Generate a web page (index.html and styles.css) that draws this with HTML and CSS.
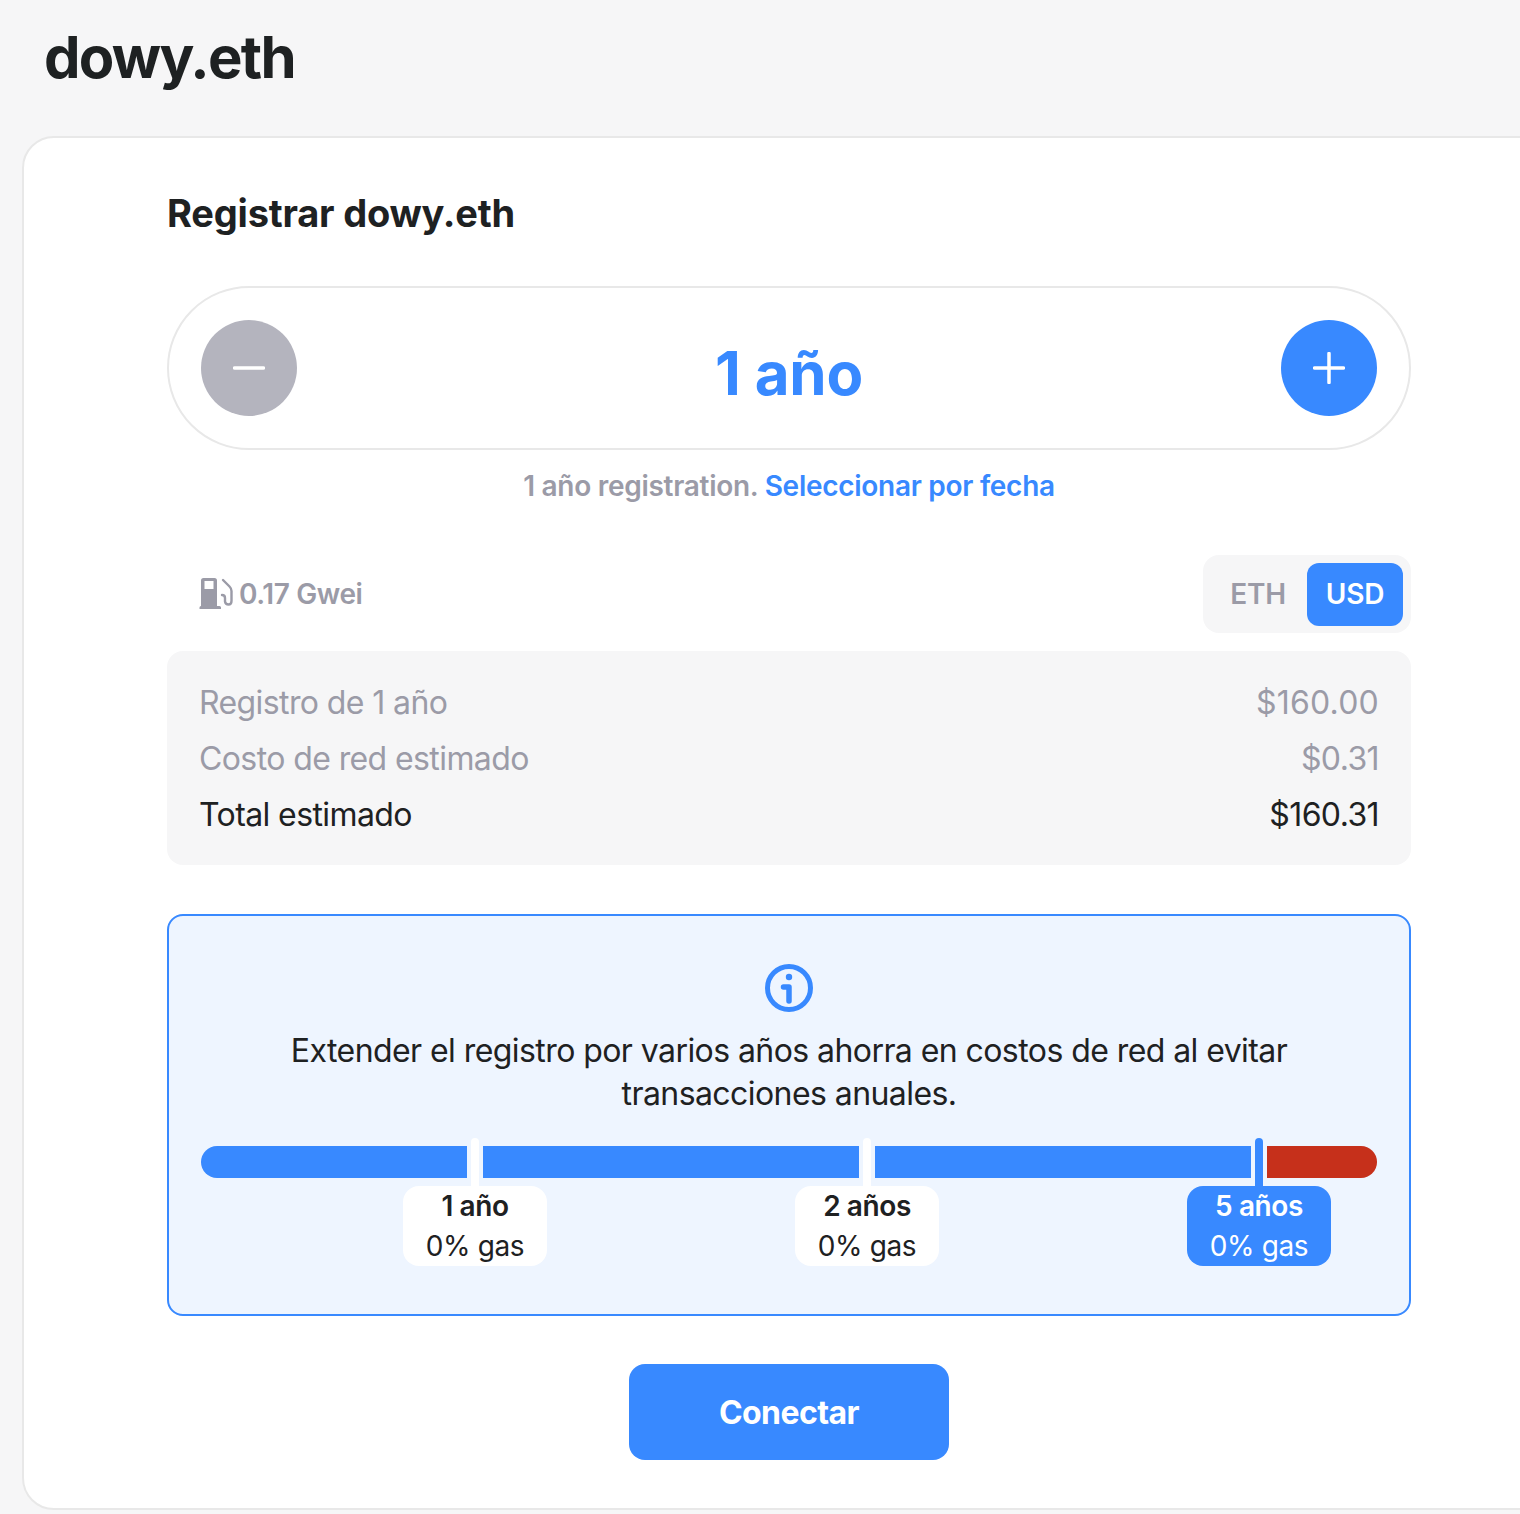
FILE: index.html
```html
<!DOCTYPE html>
<html lang="es">
<head>
<meta charset="utf-8">
<title>dowy.eth</title>
<link rel="stylesheet" href="styles.css">
</head>
<body>
<main class="page">
  <h1 class="title">dowy.eth</h1>
  <section class="card">
    <h2 class="heading">Registrar dowy.eth</h2>
    <div class="stepper">
      <button class="round round-off" aria-label="menos"><svg width="32" height="32" viewBox="0 0 32 32"><path d="M1.500 16h29" stroke="#fff" stroke-width="3.500" stroke-linecap="round"/></svg></button>
      <div class="years">1 año</div>
      <button class="round round-on" aria-label="más"><svg width="32" height="32" viewBox="0 0 32 32"><path d="M1.500 16h29M16 1.500v29" stroke="#fff" stroke-width="3.500" stroke-linecap="round"/></svg></button>
    </div>
    <p class="note">1 año registration. <a class="link">Seleccionar por fecha</a></p>
    <div class="gas-row">
      <div class="gas">
        <svg class="gas-icon" width="32" height="32" viewBox="0 0 32 32"><path fill="#9b9ba7" fill-rule="evenodd" d="M1 2.500A2.500 2.500 0 0 1 3.500 0h11A2.500 2.500 0 0 1 17 2.500V28h2.500q1.500 0 1.500 1.500V31H-.5v-1.500Q-.5 28 1 28zM4.500 3v8h9V3z"/><path fill="none" stroke="#9b9ba7" stroke-width="2.400" stroke-linecap="round" d="M23 2l6.500 6.500q2 2 2 4.500v10q0 3.500-3 3.500T25 23.500V20q0-3-3-3"/></svg>
        <span>0.17 Gwei</span>
      </div>
      <div class="toggle">
        <span class="toggle-opt">ETH</span>
        <span class="toggle-opt toggle-active">USD</span>
      </div>
    </div>
    <div class="prices">
      <div class="price"><span>Registro de 1 año</span><span class="amount-wide">$160.00</span></div>
      <div class="price"><span>Costo de red estimado</span><span>$0.31</span></div>
      <div class="price price-total"><span>Total estimado</span><span>$160.31</span></div>
    </div>
    <div class="info">
      <svg class="info-icon" width="48" height="48" viewBox="0 0 48 48"><circle cx="24" cy="24" r="21.500" fill="none" stroke="#3889ff" stroke-width="5"/><circle cx="24" cy="13" r="3.200" fill="#3889ff"/><path d="M18.500 23H24v14" fill="none" stroke="#3889ff" stroke-width="5.500" stroke-linecap="round" stroke-linejoin="round"/></svg>
      <p class="info-text">Extender el registro por varios años ahorra en costos de red al evitar transacciones anuales.</p>
      <div class="bar">
        <div class="seg seg-a">
          <div class="marker"></div>
          <div class="tag"><strong>1 año</strong><span>0% gas</span></div>
        </div>
        <div class="seg seg-b">
          <div class="marker"></div>
          <div class="tag"><strong>2 años</strong><span>0% gas</span></div>
        </div>
        <div class="seg seg-b">
          <div class="marker marker-on"></div>
          <div class="tag tag-on"><strong>5 años</strong><span>0% gas</span></div>
        </div>
        <div class="seg seg-end"></div>
      </div>
    </div>
    <div class="actions"><button class="connect">Conectar</button></div>
  </section>
</main>
</body>
</html>
```
FILE: styles.css
```css
* { box-sizing: border-box; }
html, body { margin: 0; padding: 0; }
body {
  background: #f6f6f7;
  font-family: Inter, "Noto Sans", sans-serif;
  color: #1e2122;
  overflow: hidden;
}
.page { width: 1520px; height: 1514px; overflow: hidden; padding-left: 22px; }
.title {
  margin: 0;
  height: 136px;
  padding: 21px 0 0 22px;
  font-size: 58px;
  line-height: 72px;
  font-weight: 700;
  letter-spacing: -1.75px;
}
.card {
  width: 1534px;
  height: 1374px;
  background: #fff;
  border: 2px solid #e8e8e8;
  border-radius: 32px;
  padding: 0 143px;
}
.heading {
  margin: 0;
  height: 148px;
  padding-top: 50px;
  font-size: 38px;
  line-height: 50px;
  font-weight: 700;
  letter-spacing: -.2px;
}
.stepper {
  height: 164px;
  border: 2px solid #e8e8e8;
  border-radius: 82px;
  padding: 0 32px;
  display: flex;
  align-items: center;
  justify-content: space-between;
}
.round {
  width: 96px;
  height: 96px;
  border: 0;
  padding: 0;
  border-radius: 50%;
  display: flex;
  align-items: center;
  justify-content: center;
}
.round-off { background: #b4b4be; }
.round-on { background: #3889ff; }
.years {
  font-size: 60px;
  line-height: 72px;
  font-weight: 700;
  color: #3889ff;
  letter-spacing: -.2px;
  padding-top: 10px;
}
.note {
  margin: 0;
  height: 105px;
  padding-top: 16px;
  text-align: center;
  font-size: 28px;
  line-height: 40px;
  font-weight: 600;
  color: #9b9ba7;
  letter-spacing: -.28px;
}
.link { color: #3889ff; }
.gas-row {
  height: 78px;
  display: flex;
  align-items: center;
  justify-content: space-between;
  padding-left: 33px;
  margin-bottom: 18px;
}
.gas {
  display: flex;
  align-items: center;
  gap: 7px;
  font-size: 28px;
  line-height: 40px;
  font-weight: 600;
  color: #9b9ba7;
  letter-spacing: -.4px;
}
.gas-icon { display: block; overflow: visible; }
.toggle {
  width: 208px;
  height: 78px;
  background: #f6f6f7;
  border-radius: 16px;
  padding: 8px;
  display: flex;
  justify-content: flex-end;
  gap: 2px;
}
.toggle-opt {
  width: 94px;
  height: 63px;
  padding-bottom: 1px;
  display: flex;
  align-items: center;
  justify-content: center;
  font-size: 28px;
  font-weight: 600;
  color: #9b9ba7;
  border-radius: 12px;
  letter-spacing: -.2px;
}
.toggle-active { width: 96px; background: #3889ff; color: #fff; }
.prices {
  height: 214px;
  background: #f6f6f7;
  border-radius: 16px;
  padding: 24px 32px;
  margin-bottom: 49px;
  font-size: 32px;
  line-height: 56px;
  color: #9b9ba7;
  letter-spacing: -.6px;
}
.price { display: flex; justify-content: space-between; height: 56px; }
.amount-wide { letter-spacing: .2px; }
.price-total { color: #1e2122; }
.info {
  height: 402px;
  background: #eef5ff;
  border: 2px solid #3889ff;
  border-radius: 16px;
  padding: 48px 32px 0;
  display: flex;
  flex-direction: column;
  align-items: center;
}
.info-icon { display: block; flex: none; }
.info-text {
  margin: 17px 0 0;
  width: 1040px;
  text-align: center;
  font-size: 32px;
  line-height: 43px;
  letter-spacing: -.57px;
}
.bar {
  margin-top: 31px;
  width: 1176px;
  display: flex;
  gap: 16px;
}
.seg { position: relative; height: 32px; background: #3889ff; }
.seg-a { width: 266px; border-radius: 16px 0 0 16px; }
.seg-b { width: 376px; }
.seg-end { width: 110px; background: #c6301b; border-radius: 0 16px 16px 0; }
.marker {
  position: absolute;
  right: -12px;
  top: -8px;
  width: 8px;
  height: 48px;
  background: #fff;
  border-radius: 4px 4px 0 0;
}
.marker-on { background: #3889ff; }
.tag {
  position: absolute;
  right: -80px;
  top: 40px;
  width: 144px;
  height: 80px;
  background: #fff;
  border-radius: 16px;
  display: flex;
  flex-direction: column;
  align-items: center;
  font-size: 28px;
  line-height: 40px;
  letter-spacing: -.4px;
}
.tag strong { font-weight: 600; }
.tag-on { background: #3889ff; color: #fff; }
.actions { display: flex; justify-content: center; padding-top: 48px; }
.connect {
  width: 320px;
  height: 96px;
  border: 0;
  border-radius: 16px;
  background: #3889ff;
  color: #fff;
  font-family: inherit;
  font-size: 32px;
  font-weight: 700;
  letter-spacing: -.55px;
}
```
